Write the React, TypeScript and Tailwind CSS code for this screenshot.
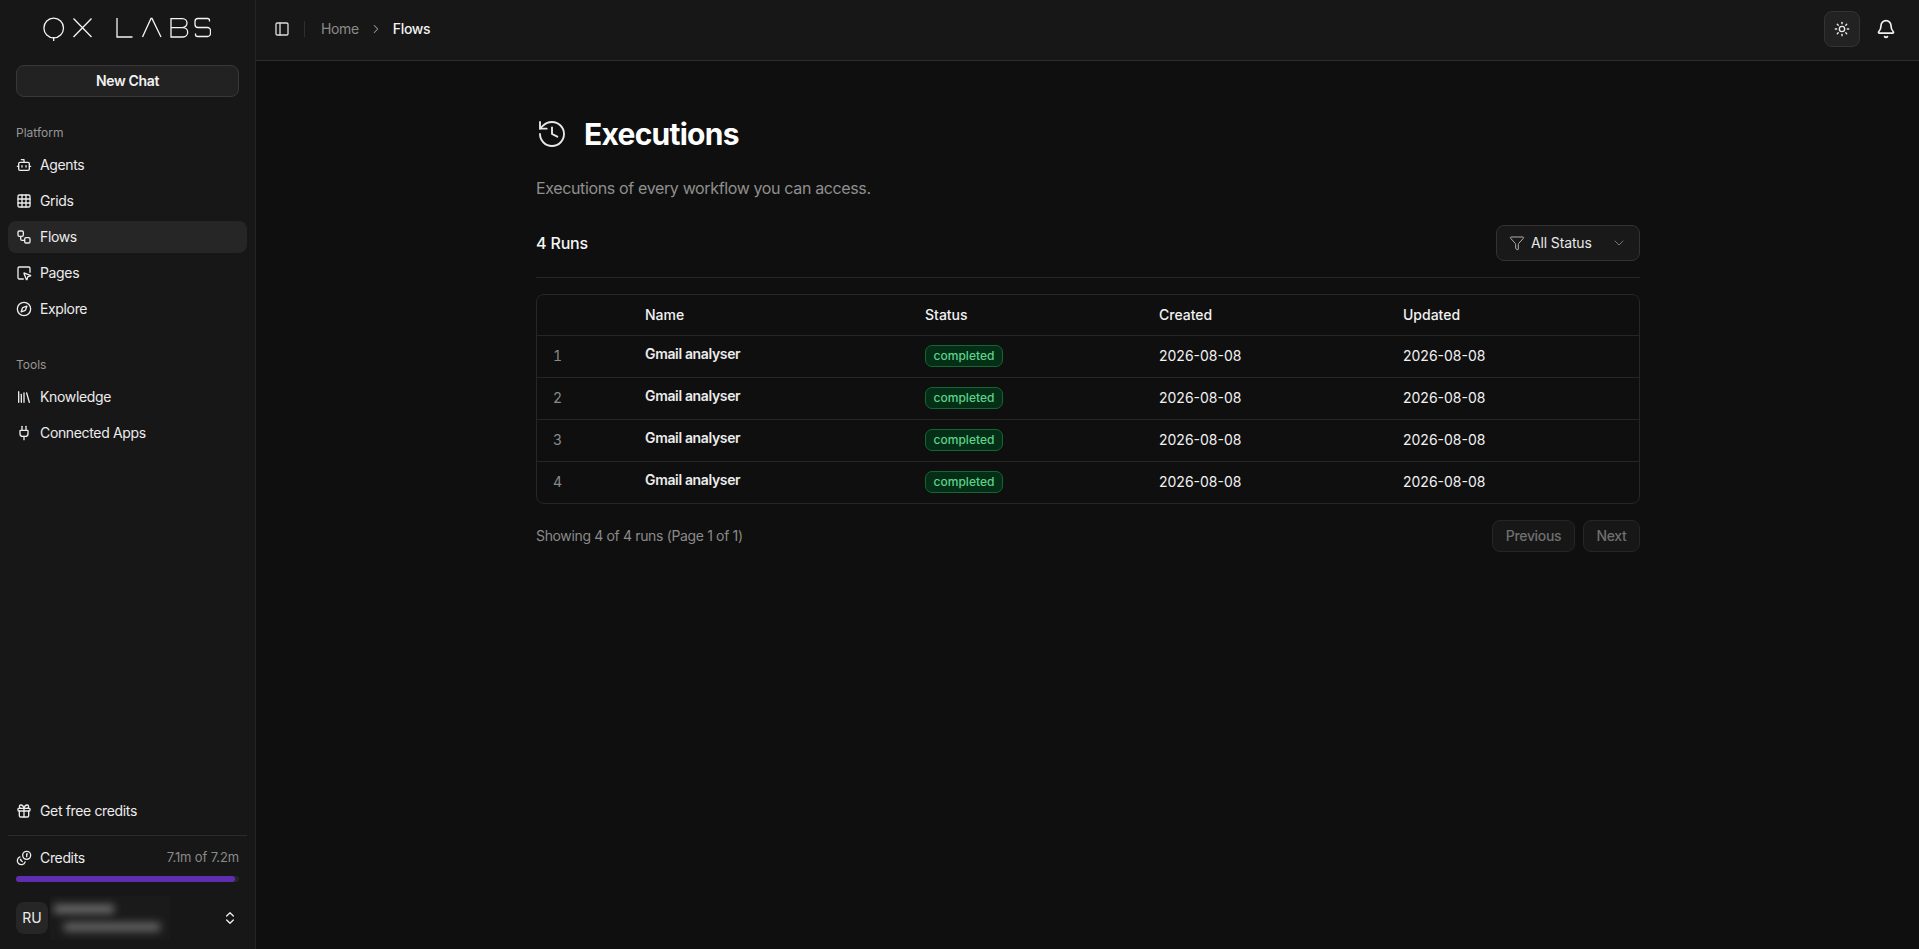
import React from "react";
import { Bot, Grid3x3, Workflow, SquareMousePointer, Compass, Library, Plug, Gift, Coins, ChevronsUpDown, PanelLeft, ChevronRight, Sun, Bell, History, Funnel, ChevronDown } from "lucide-react";

function Logo() {
  return (
    <svg width="168" height="26" viewBox="43 17 168 26" fill="none" stroke="#f5f5f5" strokeWidth="1.3" role="img" aria-label="QX LABS">
      <circle cx="53.7" cy="28" r="9.8" />
      <line x1="53.7" y1="37" x2="53.7" y2="41" />
      <path d="M73.5 18.5 91.5 37M91.5 18.5 73.5 37" />
      <path d="M117 18v19h15.5" />
      <path d="M142.5 37 151 18.5h1L161 37" />
      <path d="M171 18.6h11.5a4.4 4.4 0 0 1 0 9H171zM171 27.6h12a4.7 4.7 0 0 1 0 9.4h-12z" />
      <path d="M209.5 21.5v-1a2 2 0 0 0-2-2h-9.5a3 3 0 0 0-3 3v3a3 3 0 0 0 3 3h9.5a3 3 0 0 1 3 3v3a3 3 0 0 1-3 3h-10a2 2 0 0 1-2-2v-1" />
    </svg>
  );
}

function NavItem({ icon: Icon, label, active }: { icon: React.ComponentType<{ size?: number; strokeWidth?: number; className?: string }>; label: string; active?: boolean }) {
  return (
    <a className={`flex h-8 items-center gap-2 rounded-lg px-2 text-sm tracking-tight text-[#ececec] ${active ? "bg-[#262626]" : ""}`}>
      <Icon size={16} strokeWidth={2} className="shrink-0" />
      <span>{label}</span>
    </a>
  );
}

function Sidebar() {
  return (
    <aside className="flex h-full w-[256px] shrink-0 flex-col border-r border-[#242424] bg-[#171717]">
      <div className="flex h-[60px] items-center pl-[43px]">
        <Logo />
      </div>
      <div className="mt-[5px] px-4">
        <button className="h-8 w-full rounded-lg border border-[#383838] bg-[#222222] text-sm font-semibold tracking-tight text-[#f2f2f2]">New Chat</button>
      </div>
      <div className="mt-[28px] px-4 text-xs leading-4 text-[#969696]">Platform</div>
      <nav className="mt-2 flex flex-col gap-1 px-2">
        <NavItem icon={Bot} label="Agents" />
        <NavItem icon={Grid3x3} label="Grids" />
        <NavItem icon={Workflow} label="Flows" active />
        <NavItem icon={SquareMousePointer} label="Pages" />
        <NavItem icon={Compass} label="Explore" />
      </nav>
      <div className="mt-8 px-4 text-xs leading-4 text-[#969696]">Tools</div>
      <nav className="mt-2 flex flex-col gap-1 px-2">
        <NavItem icon={Library} label="Knowledge" />
        <NavItem icon={Plug} label="Connected Apps" />
      </nav>
      <div className="mt-auto px-2">
        <NavItem icon={Gift} label="Get free credits" />
        <div className="mt-2 border-t border-[#2c2c2c]" />
      </div>
      <div className="mt-[12px] flex h-5 items-center justify-between px-4">
        <div className="flex items-center gap-2 text-sm tracking-tight text-[#ececec]">
          <Coins size={16} strokeWidth={2} className="-scale-x-100" />
          <span>Credits</span>
        </div>
        <span className="text-[13px] tracking-[-0.01em] text-[#8a8a8a]">7.1m of 7.2m</span>
      </div>
      <div className="mx-4 mt-2 h-1.5 rounded-full bg-[#262626]">
        <div className="h-full w-[98%] rounded-full bg-[#5f2eb0]" />
      </div>
      <div className="relative mt-5 mb-[15px] flex h-8 items-center justify-between pl-4 pr-[17px]">
        <div className="flex size-8 items-center justify-center rounded-lg bg-[#262626] text-sm text-[#ececec]">RU</div>
        <div className="absolute left-[50px] top-[-6px] flex h-11 w-[120px] flex-col gap-2.5 overflow-hidden bg-[#1a1a1a] pt-[9px]">
          <div className="ml-[4px] h-2 w-[60px] bg-[#757575] blur-[4px]" />
          <div className="ml-[14px] h-2 w-[96px] bg-[#6e6e6e] blur-[4px]" />
        </div>
        <ChevronsUpDown size={16} strokeWidth={2} className="text-[#ececec]" />
      </div>
    </aside>
  );
}

function Header() {
  return (
    <header className="flex h-[61px] shrink-0 items-center justify-between border-b border-[#2c2c2c] bg-[#171717] pb-0.5 pl-[18px] pr-[23px]">
      <div className="flex items-center text-sm tracking-tight">
        <PanelLeft size={16} strokeWidth={2} className="text-[#dcdcdc]" />
        <div className="ml-[14px] mr-4 h-4 w-px bg-[#2e2e2e]" />
        <span className="text-[#8a8a8a]">Home</span>
        <ChevronRight size={14} strokeWidth={1.75} className="mx-[10px] text-[#9a9a9a]" />
        <span className="font-medium text-[#f2f2f2]">Flows</span>
      </div>
      <div className="flex items-center gap-4">
        <button className="flex size-9 items-center justify-center rounded-lg border border-[#333333] bg-[#222222] text-[#ececec]">
          <Sun size={16} strokeWidth={2} />
        </button>
        <Bell size={20} strokeWidth={2} className="text-[#f2f2f2]" />
      </div>
    </header>
  );
}

const th = "h-[40px] px-0 text-left align-middle text-sm font-medium text-[#f2f2f2]";
const td = "h-[42px] border-t border-[#262626] p-0 align-middle text-sm";

function Table() {
  return (
    <div className="mt-4 overflow-hidden rounded-lg border border-[#262626]">
      <table className="w-full table-fixed border-collapse">
        <thead>
          <tr>
            <th className={`${th} w-[108px]`} />
            <th className={`${th} w-[280px]`}>Name</th>
            <th className={`${th} w-[234px]`}>Status</th>
            <th className={`${th} w-[244px]`}>Created</th>
            <th className={th}>Updated</th>
          </tr>
        </thead>
        <tbody>
          {[1, 2, 3, 4].map((n) => (
            <tr key={n}>
              <td className={`${td} pl-4 tabular-nums tracking-tight text-[#8a8a8a]`}>{n}</td>
              <td className={`${td} pb-1 font-semibold tracking-tight text-[#ececec]`}>Gmail analyser</td>
              <td className={td}>
                <span className="inline-flex h-[22px] w-[78px] items-center justify-center rounded-[7px] border border-[#166534] bg-[#052e16] text-xs font-medium text-[#5bd48a]">completed</span>
              </td>
              <td className={`${td} text-[#f2f2f2]`}>2026-08-08</td>
              <td className={`${td} text-[#f2f2f2]`}>2026-08-08</td>
            </tr>
          ))}
        </tbody>
      </table>
    </div>
  );
}

export default function App() {
  return (
    <div className="flex h-screen w-full overflow-hidden bg-[#0f0f0f] [font-family:Inter,'Noto_Sans',sans-serif]">
      <Sidebar />
      <main className="flex min-w-0 flex-1 flex-col">
        <Header />
        <div className="ml-[280px] w-[1104px] pt-[55px]">
          <div className="flex h-9 items-center">
            <History size={32} strokeWidth={1.4} className="text-[#e8e8e8]" />
            <h1 className="ml-4 text-[30px] font-bold tracking-tight text-white">Executions</h1>
          </div>
          <p className="mt-6 text-base leading-6 tracking-[-0.0225em] text-[#8f8f8f]">Executions of every workflow you can access.</p>
          <div className="mt-[25px] flex h-9 items-center justify-between">
            <span className="text-base font-medium tracking-[-0.01em] text-[#f5f5f5]">4 Runs</span>
            <button className="flex h-9 w-[144px] items-center justify-between rounded-lg border border-[#333333] bg-[#191919] pl-3 pr-3 text-sm tracking-[-0.01em] text-[#e8e8e8]">
              <span className="flex items-center gap-1.5">
                <Funnel size={16} strokeWidth={1.5} className="text-[#b0b0b0]" />
                All Status
              </span>
              <ChevronDown size={16} strokeWidth={1.5} className="text-[#777777]" />
            </button>
          </div>
          <div className="mt-4 border-t border-[#262626]" />
          <Table />
          <div className="mt-4 flex items-center justify-between">
            <span className="text-sm tracking-tight text-[#8a8a8a]">Showing 4 of 4 runs (Page 1 of 1)</span>
            <div className="flex gap-2">
              <button className="h-8 w-[83px] rounded-lg border border-[#262626] bg-[#171717] text-sm font-medium tracking-tight text-[#6f6f6f]">Previous</button>
              <button className="h-8 w-[57px] rounded-lg border border-[#262626] bg-[#171717] text-sm font-medium tracking-tight text-[#6f6f6f]">Next</button>
            </div>
          </div>
        </div>
      </main>
    </div>
  );
}
